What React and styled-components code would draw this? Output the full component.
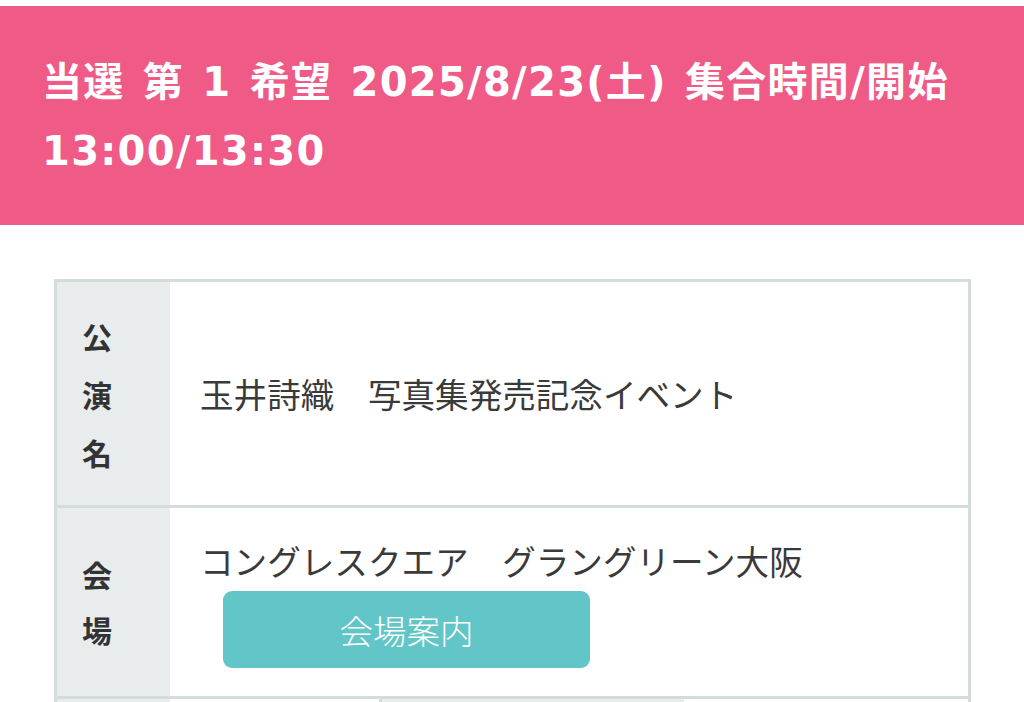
import React from 'react';
import styled, { createGlobalStyle } from 'styled-components';

const GlobalStyle = createGlobalStyle`
  html, body {
    margin: 0;
    padding: 0;
    background: #fff;
    font-family: "Noto Sans CJK JP", "Noto Sans", sans-serif;
  }
`;

const Page = styled.div`
  padding-top: 6px;
  background: #fff;
`;

const Banner = styled.div`
  background: #ef5a87;
  color: #fff;
  padding: 42px 30px 39px 42px;
  font-family: "DejaVu Sans", "Noto Sans CJK JP", sans-serif;
  font-size: 40px;
  font-weight: 700;
  line-height: 69px;
  letter-spacing: 1.3px;
  word-spacing: 3px;
`;

const Table = styled.div`
  margin: 54px 53px 0 54px;
  border: 3px solid #d4dcdc;
  border-bottom: none;
`;

const Row = styled.div`
  display: flex;
  min-height: ${p => p.h}px;
  border-bottom: 3px solid #d4dcdc;
`;

const Head = styled.div`
  width: 113px;
  box-sizing: border-box;
  padding-left: 25px;
  flex-shrink: 0;
  background: #e9eced;
  display: flex;
  flex-direction: column;
  align-items: flex-start;
  justify-content: center;
  font-size: 30px;
  font-weight: 700;
  color: #333;
  line-height: ${p => p.lh || 58}px;
`;

const Body = styled.div`
  flex: 1;
  display: flex;
  flex-direction: column;
  justify-content: center;
  padding: 0 30px;
  font-size: 33.6px;
  font-weight: 400;
  color: #3a3a3a;
  line-height: 50px;
`;

const Button = styled.div`
  margin: 5px 0 0 23px;
  width: 367px;
  height: 77px;
  border-radius: 9px;
  background: #62c6c8;
  color: #fff;
  display: flex;
  align-items: center;
  justify-content: center;
  font-size: 33.5px;
  font-weight: 300;
`;

const Cell = styled.div`
  width: ${p => p.w}px;
  background: ${p => p.bg};
  border-right: ${p => (p.line ? '3px solid #d4dcdc' : 'none')};
`;

const rows = [
  { label: ['公', '演', '名'], text: '玉井詩織　写真集発売記念イベント', h: 223 },
];

export default function App() {
  return (
    <Page>
      <GlobalStyle />
      <Banner>
        当選 第 1 希望 2025/8/23(土) 集合時間/開始
        <br />
        13:00/13:30
      </Banner>
      <Table>
        {rows.map(r => (
          <Row key={r.text} h={r.h}>
            <Head>
              {r.label.map(c => (
                <span key={c}>{c}</span>
              ))}
            </Head>
            <Body>{r.text}</Body>
          </Row>
        ))}
        <Row h={188}>
          <Head lh={55}>
            <span>会</span>
            <span>場</span>
          </Head>
          <Body>
            <span>コングレスクエア　グラングリーン大阪</span>
            <Button>会場案内</Button>
          </Body>
        </Row>
        <Row h={60}>
          <Head />
          <Cell w={209} bg="#fff" line />
          <Cell w={302} bg="#e9eced" />
          <Cell w={284} bg="#fff" />
        </Row>
      </Table>
    </Page>
  );
}
